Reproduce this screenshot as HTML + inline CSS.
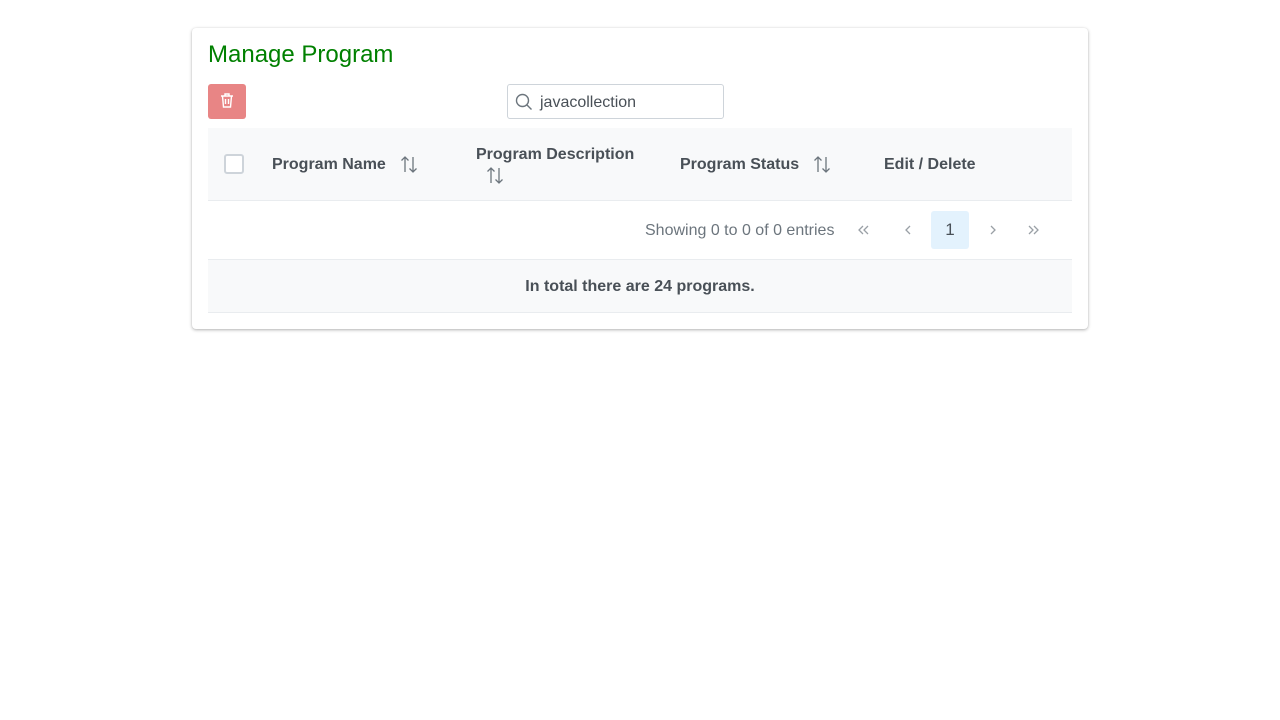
<!DOCTYPE html>
<html><head><meta charset="utf-8"><style>
*{box-sizing:border-box;margin:0;padding:0}
body{width:1280px;height:720px;background:#fff;font-family:"Liberation Sans",Arial,sans-serif;position:relative;overflow:hidden}
.card{position:absolute;left:192px;top:28px;width:896px;height:301px;border-radius:4px;box-shadow:0 1px 3px rgba(0,0,0,.3),0 0 1px rgba(0,0,0,.08);background:#fff}
.abs{position:absolute}
h1{position:absolute;left:16px;top:13px;font-size:24px;font-weight:normal;color:#008000}
.del{left:16px;top:56px;width:38px;height:35px;background:#e88585;border-radius:3px}
.search{left:315px;top:56px;width:217px;height:35px;border:1px solid #ced4da;border-radius:3px;font-size:16px;color:#495057}
.thead{left:16px;top:100px;width:864px;height:73px;background:#f8f9fa;border-bottom:1px solid #e9ecef}
.th{font-weight:bold;font-size:16px;color:#495057}
.cb{left:16px;top:26px;width:20px;height:20px;border:2px solid #ced4da;border-radius:3px;background:#fff}
.foot{left:16px;top:231px;width:864px;height:54px;background:#f8f9fa;border-top:1px solid #e9ecef;border-bottom:1px solid #e9ecef;text-align:center;font-weight:bold;font-size:16px;color:#495057;line-height:53px}
.pg{font-size:16px;color:#6c757d}
</style></head><body>
<svg width="0" height="0" style="position:absolute"><defs><g id="sort" fill="none" stroke="#6c757d" stroke-width="1.3"><path d="M5 17V2M1.5 5.5L5 2l3.5 3.5M13 2v15M9.5 13.5L13 17l3.5-3.5"/></g></defs></svg>
<div class="card">
<h1>Manage Program</h1>
<div class="abs del"><svg width="38" height="35" viewBox="0 0 38 35"><g fill="none" stroke="#fff" stroke-width="1.4"><path d="M13 12h12M17 12v-2h4v2M14.5 12l1 11h7l1-11M17.5 15v5M20.5 15v5"/></g></svg></div>
<div class="abs search"><svg class="abs" style="left:7px;top:8px" width="18" height="18" viewBox="0 0 18 18"><circle cx="7.5" cy="7.5" r="6" fill="none" stroke="#6c757d" stroke-width="1.4"/><path d="M12 12l4.5 4.5" stroke="#6c757d" stroke-width="1.4"/></svg><span class="abs" style="left:32px;top:9px">javacollection</span></div>
<div class="abs thead">
<div class="abs cb"></div>
<span class="abs th" style="left:64px;top:28px">Program Name</span>
<svg class="abs" style="left:192px;top:27px" width="18" height="19"><use href="#sort"/></svg>
<span class="abs th" style="left:268px;top:18px">Program Description</span>
<svg class="abs" style="left:278px;top:38px" width="18" height="19"><use href="#sort"/></svg>
<span class="abs th" style="left:472px;top:28px">Program Status</span>
<svg class="abs" style="left:605px;top:27px" width="18" height="19"><use href="#sort"/></svg>
<span class="abs th" style="left:676px;top:28px">Edit / Delete</span>
</div>
<span class="abs pg" style="left:453px;top:194px">Showing 0 to 0 of 0 entries</span>
<svg class="abs" style="left:660px;top:192px" width="200" height="20" fill="none" stroke="#9aa0a6" stroke-width="1.3">
<path d="M11 6l-4 4 4 4M16 6l-4 4 4 4"/>
<path d="M58 6l-4 4 4 4"/>
<path d="M139 6l4 4-4 4"/>
<path d="M177 6l4 4-4 4M182 6l4 4-4 4"/>
</svg>
<div class="abs" style="left:739px;top:183px;width:38px;height:38px;background:#e3f2fd;border-radius:3px;text-align:center;line-height:38px;font-size:17px;color:#495057">1</div>
<div class="abs foot">In total there are 24 programs.</div>
</div>
</body></html>
